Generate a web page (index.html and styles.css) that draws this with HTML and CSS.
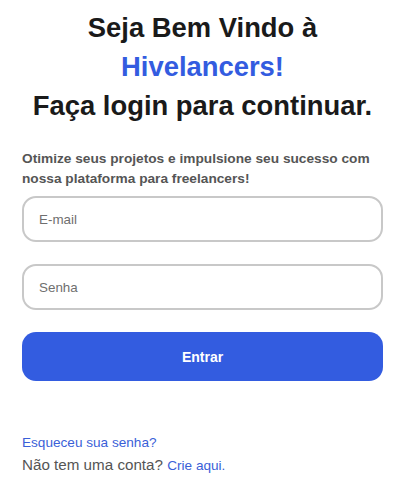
FILE: index.html
```html
<!DOCTYPE html>
<html lang="pt-BR">
<head>
<meta charset="utf-8">
<link rel="stylesheet" href="styles.css">
</head>
<body>
<main class="login">
  <h1 class="title">Seja Bem Vindo à<br><span class="brand">Hivelancers!</span><br>Faça login para continuar.</h1>
  <p class="subtitle">Otimize seus projetos e impulsione seu sucesso com nossa plataforma para freelancers!</p>
  <form class="form">
    <input class="field" type="email" placeholder="E-mail">
    <input class="field" type="password" placeholder="Senha">
    <button class="submit" type="button">Entrar</button>
  </form>
  <div class="links">
    <a class="link" href="#">Esqueceu sua senha?</a>
    <p class="signup">Não tem uma conta? <a class="link" href="#">Crie aqui.</a></p>
  </div>
</main>
</body>
</html>
```
FILE: styles.css
```css
* { box-sizing: border-box; }
html, body { margin: 0; background: #fff; }
body {
  font-family: "Liberation Sans", Arial, sans-serif;
  color: #1a1a1a;
}
.login {
  padding: 8px 22px 0;
  width: 405px;
}
.title {
  margin: 0;
  text-align: center;
  font-size: 27.4px;
  line-height: 39px;
  font-weight: 700;
  color: #1a1a1a;
}
.brand { color: #335ce0; }
.subtitle {
  margin: 24px 0 0;
  font-size: 13.7px;
  line-height: 19.5px;
  font-weight: 700;
  color: #555;
}
.form {
  display: flex;
  flex-direction: column;
  gap: 22px;
  margin-top: 8px;
}
.field {
  height: 46px;
  width: 100%;
  border: 2px solid #c8c8c8;
  border-radius: 14px;
  padding: 0 15px;
  font-family: inherit;
  font-size: 13.4px;
  color: #333;
  outline: none;
}
.field::placeholder { color: #6f6f6f; }
.submit {
  height: 49px;
  width: 100%;
  border: 0;
  border-radius: 14px;
  background: #335ce0;
  color: #fff;
  font-family: inherit;
  font-size: 14px;
  font-weight: 700;
}
.links {
  margin-top: 53px;
  display: flex;
  flex-direction: column;
}
.link {
  color: #3a5fd8;
  text-decoration: none;
  font-size: 13.6px;
  line-height: 18px;
}
.signup {
  margin: 3px 0 0;
  font-size: 15.2px;
  line-height: 20px;
  color: #555;
}
```
